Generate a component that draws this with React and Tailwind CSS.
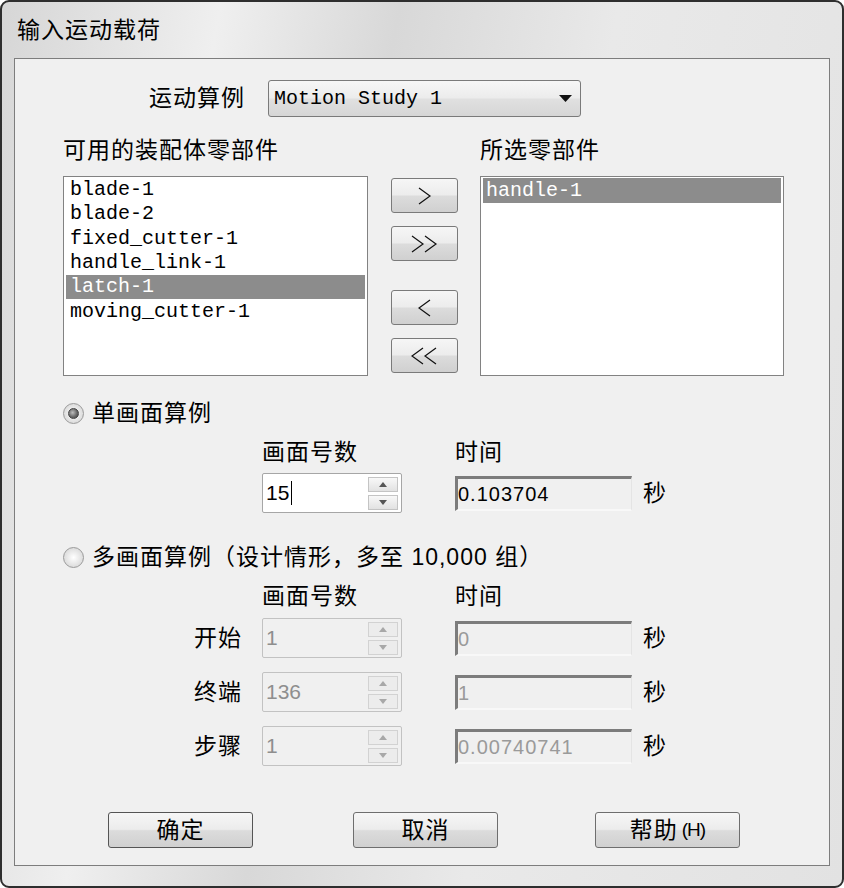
import React from 'react';

const mono = "font-['Liberation_Mono','DejaVu_Sans_Mono',monospace]";

const available = ['blade-1', 'blade-2', 'fixed_cutter-1', 'handle_link-1', 'latch-1', 'moving_cutter-1'];
const selected = ['handle-1'];

function Chevron({ dir, count }) {
  const pts = dir === 'right' ? '1,1 12,9 1,17' : '12,1 1,9 12,17';
  return (
    <svg width={count === 2 ? 27 : 14} height="18" viewBox={count === 2 ? '0 0 27 18' : '0 0 14 18'}>
      <polyline points={pts} fill="none" stroke="#111" strokeWidth="1.2" />
      {count === 2 && (
        <polyline points={pts} transform="translate(13 0)" fill="none" stroke="#111" strokeWidth="1.2" />
      )}
    </svg>
  );
}

function MoveButton({ dir, count, className }) {
  return (
    <button className={`flex h-[35px] w-[67px] items-center justify-center rounded-[3px] border border-[#7a7a7a] bg-[linear-gradient(180deg,#f6f6f6_0%,#ececec_48%,#dcdcdc_52%,#d0d0d0_100%)] ${className}`}>
      <Chevron dir={dir} count={count} />
    </button>
  );
}

function Radio({ checked, label }) {
  return (
    <div className="flex h-[26px] items-center">
      <span className="flex h-[21px] w-[21px] items-center justify-center rounded-full border border-[#9a9a9a] bg-[radial-gradient(circle,#ffffff_0%,#e2e2e2_60%,#cfcfcf_100%)]">
        {checked && (
          <span className="h-[11px] w-[11px] rounded-full border border-[#444] bg-[radial-gradient(circle_at_40%_40%,#bdbdbd_0%,#6a6a6a_55%,#3a3a3a_100%)]" />
        )}
      </span>
      <span className="ml-[8px] text-[23px] tracking-[1px] text-black">{label}</span>
    </div>
  );
}

function SpinArrow({ up, disabled }) {
  return (
    <div className={`flex h-[15px] w-[30px] items-center justify-center border ${disabled ? 'border-[#d2d2d2] bg-[#ececec]' : 'border-[#c4c4c4] bg-[linear-gradient(180deg,#f8f8f8,#e2e2e2)]'}`}>
      <svg width="8" height="5" viewBox="0 0 8 5">
        <polygon points={up ? '0,5 4,0 8,5' : '0,0 4,5 8,0'} fill={disabled ? '#a8a8a8' : '#555'} />
      </svg>
    </div>
  );
}

function SpinBox({ value, disabled, caret }) {
  return (
    <div className={`flex h-[40px] w-[140px] items-center rounded-[2px] border pl-[3px] pr-[3px] ${disabled ? 'border-[#c2c2c2] bg-[#f0f0f0]' : 'border-[#a6a6a6] bg-white'}`}>
      <div className={`flex flex-1 items-center text-[21px] ${disabled ? 'text-[#8e8e8e]' : 'text-black'}`}>
        {value}
        {caret && <span className="ml-[2px] inline-block h-[24px] w-[1px] bg-black" />}
      </div>
      <div className="flex flex-col gap-[3px]">
        <SpinArrow up disabled={disabled} />
        <SpinArrow disabled={disabled} />
      </div>
    </div>
  );
}

function TimeField({ value, disabled }) {
  return (
    <div className={`flex h-[35px] w-[177px] items-center border-t-[3px] border-l-[3px] border-r border-b-2 border-t-[#7c7c7c] border-l-[#7c7c7c] border-r-[#e4e4e4] border-b-[#f8f8f8] bg-[#f0f0f0] text-[20px] tracking-[1px] ${disabled ? 'text-[#9a9a9a]' : 'text-black'}`}>
      {value}
    </div>
  );
}

function TimeRow({ label, spin, time, disabled, caret, className }) {
  return (
    <div className={`flex h-[40px] items-center ${className}`}>
      <div className="w-[199px] pr-[20px] text-right text-[23px] tracking-[1px]">{label}</div>
      <SpinBox value={spin} disabled={disabled} caret={caret} />
      <div className="ml-[53px]">
        <TimeField value={time} disabled={disabled} />
      </div>
      <div className="ml-[11px] text-[23px]">秒</div>
    </div>
  );
}

function ColumnLabels({ className }) {
  return (
    <div className={`flex h-[26px] items-center text-[23px] tracking-[1px] ${className}`}>
      <div className="w-[199px]" />
      <div className="w-[193px]">画面号数</div>
      <div>时间</div>
    </div>
  );
}

function DialogButton({ children, className }) {
  return (
    <button className={`flex h-[36px] w-[145px] items-center justify-center rounded-[3px] border border-[#6e6e6e] bg-[linear-gradient(180deg,#f6f6f6_0%,#ececec_48%,#dcdcdc_52%,#d0d0d0_100%)] text-[23px] tracking-[1px] text-black ${className}`}>
      {children}
    </button>
  );
}

export default function App() {
  return (
    <div className="h-[888px] w-[844px] rounded-[9px] border-2 border-[#2e2e2e] bg-[linear-gradient(100deg,#d6d6d6_0%,#efefef_22%,#d8d8d8_40%,#e9e9e9_62%,#e2e2e2_100%)] px-[12px] font-['Liberation_Sans','Noto_Sans_CJK_SC',sans-serif] text-black">
      {/* 标题栏 */}
      <div className="flex h-[56px] items-center pl-[3px] text-[23px] tracking-[1px]">输入运动载荷</div>

      {/* 内容区 */}
      <div className="h-[808px] border border-[#7d7d7d] bg-[#f0f0f0] pl-[48px]">
        {/* 运动算例 */}
        <div className="mt-[21px] flex h-[37px] items-center">
          <div className="w-[182px] text-right text-[23px] tracking-[1px]">运动算例</div>
          <div className={`ml-[23px] flex h-[37px] w-[313px] items-center justify-between rounded-[3px] border border-[#7a7a7a] bg-[linear-gradient(180deg,#f6f6f6_0%,#ececec_48%,#e0e0e0_52%,#d6d6d6_100%)] pl-[5px] pr-[8px] text-[20px] ${mono}`}>
            <span>Motion Study 1</span>
            <svg width="13" height="7" viewBox="0 0 13 7">
              <polygon points="0,0 13,0 6.5,7" fill="#111" />
            </svg>
          </div>
        </div>

        {/* 列表标题 */}
        <div className="mt-[20px] flex h-[26px] items-center text-[23px] tracking-[1px]">
          <div className="w-[417px]">可用的装配体零部件</div>
          <div>所选零部件</div>
        </div>

        {/* 列表 */}
        <div className="mt-[13px] flex h-[200px]">
          <div className={`h-[200px] w-[305px] border border-[#828282] bg-white px-[2px] pt-[1px] text-[20px] ${mono}`}>
            {available.map((item) => (
              <div
                key={item}
                className={`flex h-[24.3px] items-center pl-[4px] ${item === 'latch-1' ? 'bg-[#8c8c8c] text-white' : 'text-black'}`}
              >
                {item}
              </div>
            ))}
          </div>

          <div className="ml-[23px] flex flex-col pt-[2px]">
            <MoveButton dir="right" count={1} />
            <MoveButton dir="right" count={2} className="mt-[13px]" />
            <MoveButton dir="left" count={1} className="mt-[29px]" />
            <MoveButton dir="left" count={2} className="mt-[13px]" />
          </div>

          <div className={`ml-[22px] h-[200px] w-[304px] border border-[#828282] bg-white px-[2px] pt-[1px] text-[20px] ${mono}`}>
            {selected.map((item) => (
              <div key={item} className="flex h-[25px] items-center bg-[#8c8c8c] pl-[3px] text-white">
                {item}
              </div>
            ))}
          </div>
        </div>

        {/* 单画面算例 */}
        <div className="mt-[24px]">
          <Radio checked label="单画面算例" />
        </div>
        <ColumnLabels className="mt-[13px]" />
        <TimeRow label="" spin="15" time="0.103704" caret className="mt-[8px]" />

        {/* 多画面算例 */}
        <div className="mt-[31px]">
          <Radio label="多画面算例（设计情形，多至 10,000 组）" />
        </div>
        <ColumnLabels className="mt-[13px]" />
        <TimeRow label="开始" spin="1" time="0" disabled className="mt-[9px]" />
        <TimeRow label="终端" spin="136" time="1" disabled className="mt-[14px]" />
        <TimeRow label="步骤" spin="1" time="0.00740741" disabled className="mt-[14px]" />

        {/* 按钮 */}
        <div className="mt-[46px] flex">
          <DialogButton className="ml-[45px] border-[#555]">确定</DialogButton>
          <DialogButton className="ml-[100px]">取消</DialogButton>
          <DialogButton className="ml-[97px]">
            帮助<span className="ml-[4px] text-[19px] tracking-[-1px]">(H)</span>
          </DialogButton>
        </div>
      </div>
    </div>
  );
}
